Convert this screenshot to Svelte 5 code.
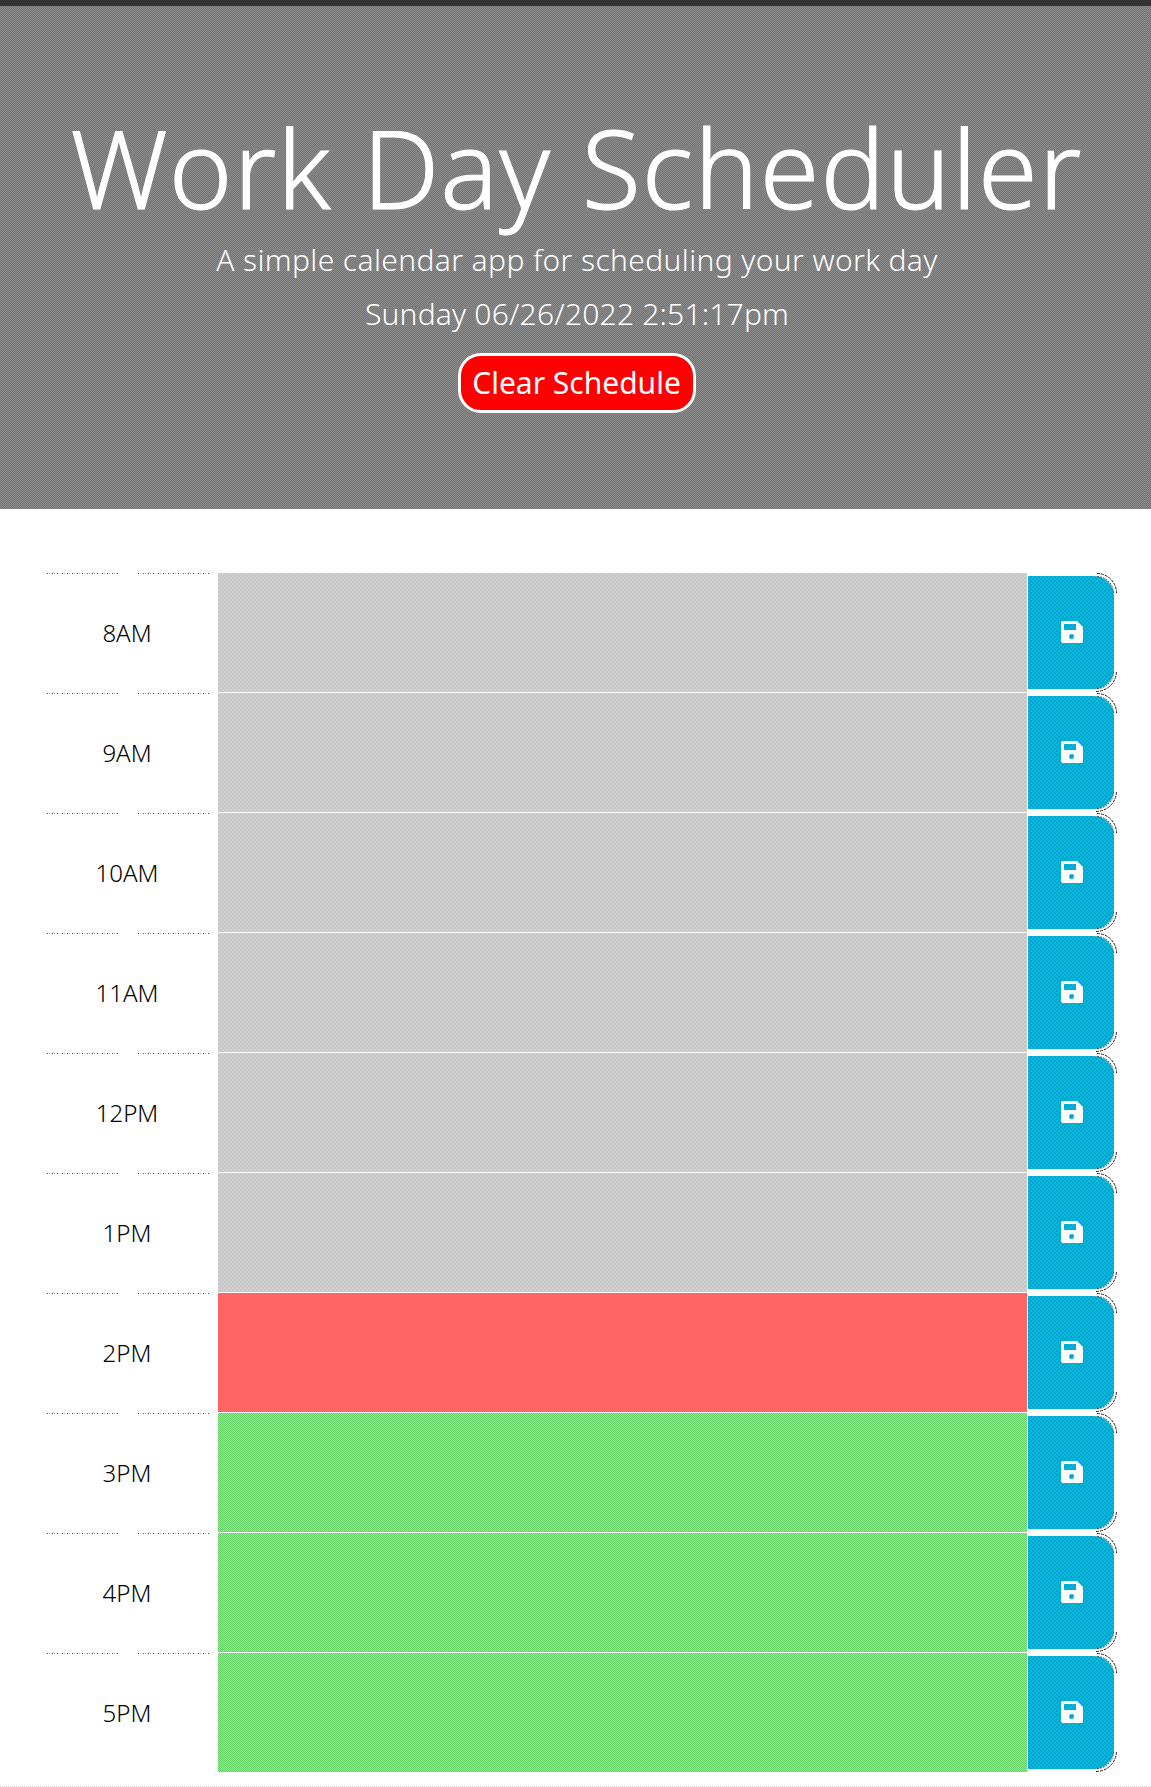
<script>
  const hours = [
    ['8AM', 'past'], ['9AM', 'past'], ['10AM', 'past'], ['11AM', 'past'], ['12PM', 'past'],
    ['1PM', 'past'], ['2PM', 'present'], ['3PM', 'future'], ['4PM', 'future'], ['5PM', 'future']
  ];
</script>

<div class="page">
  <header>
    <h1>Work Day Scheduler</h1>
    <p class="lead">A simple calendar app for scheduling your work day</p>
    <p class="lead date">Sunday 06/26/2022 2:51:17pm</p>
    <button class="clear">Clear Schedule</button>
  </header>

  <main>
    {#each hours as [label, phase]}
      <section class="row">
        <div class="hour">
          <div class="rule"><i></i><i></i></div>
          <span>{label}</span>
        </div>
        <div class="slot {phase}"></div>
        <div class="save-cell">
          <button class="save" aria-label="Save">
            <svg width="22" height="22" viewBox="0 0 22 22">
              <path fill="#fff" fill-rule="evenodd" d="M2 0H16L22 6V20Q22 22 20 22H2Q0 22 0 20V2Q0 0 2 0ZM3 3V9H15V3ZM10.5 13A2.5 2.5 0 1 0 10.5 18A2.5 2.5 0 1 0 10.5 13Z" />
            </svg>
          </button>
          <svg class="corners" width="90" height="119" viewBox="0 0 90 119" fill="none" stroke="#222">
            <path stroke-dasharray="3 1" d="M70 .5A19.500 19.500 0 0 1 89.500 20M69 118.500A20.500 20.500 0 0 0 89.500 98" />
            <path stroke-dasharray="2 1" stroke-opacity=".7" d="M70 3.500A16.500 16.500 0 0 1 86.500 20M70 115.500A16.500 16.500 0 0 0 86.500 99" />
          </svg>
        </div>
      </section>
    {/each}
  </main>
  <div class="bottom-rule"></div>
</div>

<style>
  :global(body) { margin: 0; background: #fff; }
  .page {
    width: 1151px;
    height: 1787px;
    overflow: hidden;
    display: flex;
    flex-direction: column;
    font-family: 'Noto Sans', sans-serif;
  }
  header {
    box-sizing: border-box;
    height: 509px;
    border-top: 6px solid #333336;
    padding-top: 95px;
    background: repeating-conic-gradient(#757575 0 25%, #8b8b8b 0 50%) 0 0 / 2px 2px;
    color: #fff;
    display: flex;
    flex-direction: column;
    align-items: center;
    flex: none;
  }
  h1 {
    margin: 0;
    padding-left: 2px;
    font-size: 108px;
    font-weight: 300;
    line-height: 134px;
    letter-spacing: 1.1px;
    word-spacing: 1.5px;
    font-kerning: none;
    white-space: nowrap;
    -webkit-text-stroke: 1px #fff;
  }
  .lead {
    margin: 0;
    padding-left: 3px;
    font-size: 30px;
    font-weight: 300;
    line-height: 54px;
    letter-spacing: .37px;
    white-space: nowrap;
  }
  .lead:first-of-type { margin-top: -2px; }
  .date { letter-spacing: .2px; }
  .clear {
    box-sizing: border-box;
    width: 238px;
    height: 60px;
    margin: 12px 0 0 2px;
    padding: 0 0 2px;
    border: 3px solid #fff;
    border-radius: 23px;
    background: #f00;
    color: #fff;
    font: 400 30px 'Noto Sans', sans-serif;
    white-space: nowrap;
  }
  main { padding: 64px 34px 0 46px; flex: none; }
  .row { display: grid; grid-template-columns: 172px 809px 90px; height: 120px; }
  .hour { display: flex; flex-direction: column; padding-right: 10px; }
  .rule { display: flex; gap: 20px; height: 1px; padding-left: 1px; }
  .rule i {
    flex: none;
    width: 71px;
    height: 1px;
    background: repeating-linear-gradient(90deg, #555 0 1px, #fff 1px 2px, #bbb 2px 3px, #fff 3px 5px);
  }
  .hour span { font-size: 24px; font-weight: 300; line-height: 117px; text-align: center; color: #000; }
  .slot { height: 119px; }
  .past { background: repeating-conic-gradient(#c6c6c6 0 25%, #d0d0d0 0 50%) 0 0 / 4px 4px; }
  .present { background: #ff6663; }
  .future { background: repeating-conic-gradient(#66d166 0 25%, #8aec8a 0 50%) 0 0 / 2px 2px; }
  .save-cell {
    position: relative;
    box-sizing: border-box;
    height: 119px;
    padding: 3px 3px 3px 1px;
  }
  .save {
    width: 86px;
    height: 113px;
    padding: 0 0 2px 2px;
    border: 0;
    border-radius: 0 20px 20px 0;
    background: repeating-conic-gradient(#02a4d2 0 25%, #0ab9da 0 50%) 0 0 / 4px 4px;
    display: flex;
    align-items: center;
    justify-content: center;
  }
  .corners { position: absolute; inset: 0; pointer-events: none; }
  .bottom-rule {
    height: 1px;
    margin-top: 13px;
    background: repeating-linear-gradient(90deg, #ccc 0 1px, #fff 1px 2px);
  }
</style>
